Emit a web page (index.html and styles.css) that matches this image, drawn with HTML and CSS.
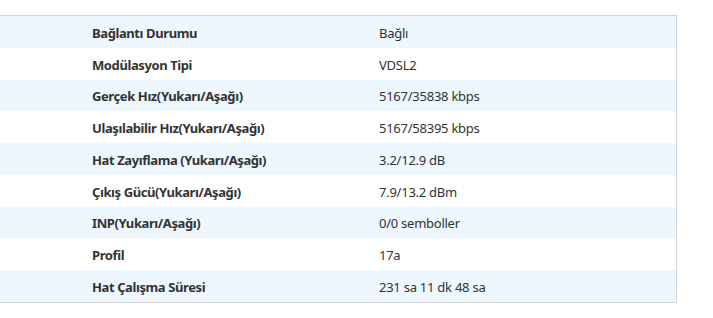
FILE: index.html
```html
<!DOCTYPE html>
<html lang="tr">
<head>
<meta charset="utf-8">
<link rel="stylesheet" href="styles.css">
</head>
<body>
<div class="info-table">
  <div class="row alt"><div class="label">Bağlantı Durumu</div><div class="value">Bağlı</div></div>
  <div class="row"><div class="label">Modülasyon Tipi</div><div class="value">VDSL2</div></div>
  <div class="row alt"><div class="label">Gerçek Hız(Yukarı/Aşağı)</div><div class="value">5167/35838 kbps</div></div>
  <div class="row"><div class="label">Ulaşılabilir Hız(Yukarı/Aşağı)</div><div class="value">5167/58395 kbps</div></div>
  <div class="row alt"><div class="label">Hat Zayıflama (Yukarı/Aşağı)</div><div class="value">3.2/12.9 dB</div></div>
  <div class="row"><div class="label">Çıkış Gücü(Yukarı/Aşağı)</div><div class="value">7.9/13.2 dBm</div></div>
  <div class="row alt"><div class="label">INP(Yukarı/Aşağı)</div><div class="value">0/0 semboller</div></div>
  <div class="row"><div class="label">Profil</div><div class="value">17a</div></div>
  <div class="row alt"><div class="label">Hat Çalışma Süresi</div><div class="value">231 sa 11 dk 48 sa</div></div>
</div>
</body>
</html>
```
FILE: styles.css
```css
html, body {
  margin: 0;
  padding: 0;
  background: #ffffff;
}
body {
  padding-top: 15px;
  font-family: "Noto Sans", "Open Sans", sans-serif;
  font-size: 13px;
  color: #333333;
}
.info-table {
  width: 676px;
  border-top: 1px solid #d4d4d4;
  border-right: 1px solid #d4d4d4;
  border-bottom: 1px solid #d4d4d4;
}
.row {
  display: grid;
  grid-template-columns: 379px 1fr;
  height: 31.78px;
  align-items: center;
}
.row.alt {
  background: #eef6fe;
}
.label {
  padding-left: 92px;
  padding-top: 2px;
  font-weight: bold;
  letter-spacing: -0.4px;
}
.value {
  padding-top: 2px;
  font-weight: normal;
  letter-spacing: -0.25px;
}
```
